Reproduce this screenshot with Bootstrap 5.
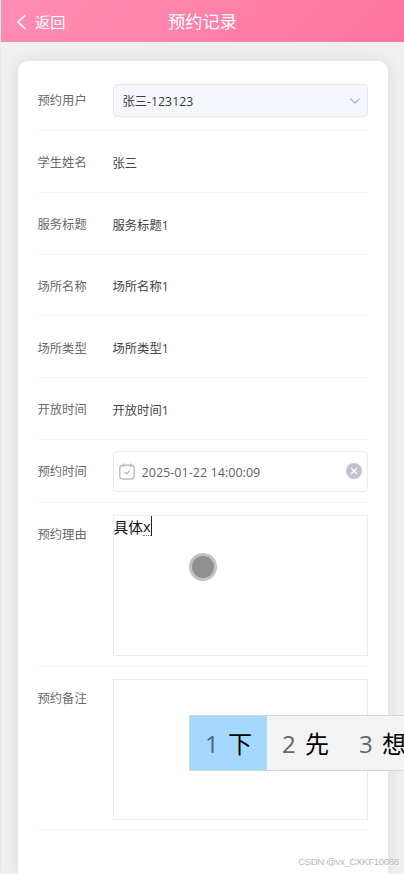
<!DOCTYPE html>
<html lang="zh-CN">
<head>
<meta charset="utf-8">
<meta name="viewport" content="width=device-width, initial-scale=1">
<title>预约记录</title>
<link href="https://cdn.jsdelivr.net/npm/bootstrap@5.3.0/dist/css/bootstrap.min.css" rel="stylesheet">
<style>
body{font-family:"Open Sans","Noto Sans CJK SC",sans-serif;font-size:12.3px;line-height:18px;height:874px;background:#f0f0f0;color:#444}
.screen{height:874px;border-left:1px solid #e6e6ee}
.topbar{height:42px;background:linear-gradient(135deg,#ff8db3,#ff759f);color:#fff}
.topbar .back{left:14px;top:13px;font-size:15.200px;gap:7px}
.topbar h1{font-size:17.200px;line-height:24px;padding-top:2px}
.panel{margin:19px 16px 0 16.500px;padding:8px 20px 0;height:813px;border-radius:10px 10px 0 0;box-shadow:0 0 15px rgba(0,0,0,.1)}
.field{border-bottom:1px solid #f5f5f5;height:61.75px}
.field.first{height:62px;padding-top:2px}
.field.date{height:63px;padding-top:1px}
.field.tall{height:163.8px;padding-top:12px}
.lab{width:75px;color:#67696e;padding-top:4px}
.first .lab,.date .lab{padding-top:1px}
.tall .lab{padding-top:11px}
.val{padding-top:5px;color:#444}
.pick{height:33px;background:#f5f7fc;border:1px solid #e6e8ee;border-radius:4px;padding:0 6px 0 9px;color:#3a3a3a}
.pick span{padding-top:3px}
.when{height:41px;border:1px solid #ebecf0;border-radius:4px;padding:0 5px 0 5px;color:#606266}
.when span{font-size:12.6px;padding:3px 0 0 7px}
.area{height:141px;border:1px solid #ebebeb;font-size:14.700px;line-height:22px;color:#111}
.typing{border-bottom:1px dotted #777;line-height:18px;height:20px;padding-top:1px}
.caret{width:1px;height:20px;background:#222}
.touch{left:189px;top:553px;width:28px;height:28px;border-radius:50%;background:#8f8f8f;border:3px solid #c2c2c2}
.ime{left:189px;top:715px;width:230px;height:56px;background:#f3f3f3;border:1px solid #d6d6d6;font-size:24px;color:#000}
.ime>div{width:77px;padding-left:15px;gap:9px;flex:none;white-space:nowrap;line-height:34px;padding-top:1px}
.ime .pickd{background:#a5d8ff}
.ime i{font-style:normal;width:14px;color:#666}
.ime .pickd i{color:#4a6680}
.wm{left:298px;top:855px;font:9.700px/14px "Liberation Sans",sans-serif;letter-spacing:-.4px;color:#b8b8b8;white-space:nowrap;text-shadow:1px 1px 0 #fff}
</style>
<script src="https://cdn.jsdelivr.net/npm/bootstrap@5.3.0/dist/js/bootstrap.bundle.min.js"></script>
</head>
<body class="position-relative overflow-hidden">
<div class="screen">
<header class="topbar position-relative text-center d-flex align-items-center justify-content-center">
<div class="back position-absolute d-flex align-items-center"><svg width="13" height="16" viewBox="0 0 13 16" fill="none" stroke="#fff" stroke-width="1.6"><path d="M10.500 1 3 8l7.500 7"/></svg><span>返回</span></div>
<h1 class="m-0 fw-normal">预约记录</h1>
</header>
<main class="panel bg-white">
<div class="field first d-flex align-items-center"><div class="lab">预约用户</div><div class="pick flex-grow-1 d-flex align-items-center justify-content-between"><span>张三-123123</span><svg width="12" height="12" viewBox="0 0 12 12" fill="none" stroke="#a8abb2" stroke-width="1.2"><path d="m1.500 3.700 4.500 4.500 4.500-4.500"/></svg></div></div>
<div class="field d-flex align-items-center"><div class="lab">学生姓名</div><div class="val">张三</div></div>
<div class="field d-flex align-items-center"><div class="lab">服务标题</div><div class="val">服务标题1</div></div>
<div class="field d-flex align-items-center"><div class="lab">场所名称</div><div class="val">场所名称1</div></div>
<div class="field d-flex align-items-center"><div class="lab">场所类型</div><div class="val">场所类型1</div></div>
<div class="field d-flex align-items-center"><div class="lab">开放时间</div><div class="val">开放时间1</div></div>
<div class="field date d-flex align-items-center"><div class="lab">预约时间</div><div class="when flex-grow-1 d-flex align-items-center"><svg width="16" height="17" viewBox="0 0 16 17" fill="none" stroke="#bcbec6" stroke-width="1.5"><path d="M3.500 2.300h9a2.700 2.700 0 0 1 2.700 2.700v8.300a2.700 2.700 0 0 1-2.700 2.700h-9a2.700 2.700 0 0 1-2.700-2.700V5A2.700 2.700 0 0 1 3.500 2.300ZM4.300.5v3.700M11.700.5v3.700M5.500 8.700l2 2 3.300-3"/></svg><span>2025-01-22 14:00:09</span><svg class="ms-auto" width="16" height="16" viewBox="0 0 16 16"><circle cx="8" cy="8" r="8" fill="#c0c3cb"/><path d="m5 5 6 6m0-6-6 6" stroke="#fff" stroke-width="1.3"/></svg></div></div>
<div class="field tall d-flex align-items-start"><div class="lab">预约理由</div><div class="area flex-grow-1 d-flex align-items-start"><span>具体</span><span class="typing">x</span><span class="caret"></span></div></div>
<div class="field tall d-flex align-items-start"><div class="lab">预约备注</div><div class="area flex-grow-1"></div></div>
</main>
</div>
<div class="touch position-absolute"></div>
<div class="ime position-absolute d-flex"><div class="pickd d-flex align-items-center"><i>1</i><span>下</span></div><div class="d-flex align-items-center"><i>2</i><span>先</span></div><div class="d-flex align-items-center"><i>3</i><span>想</span></div></div>
<div class="wm position-absolute">CSDN @vx_CXKF10088</div>
</body>
</html>
